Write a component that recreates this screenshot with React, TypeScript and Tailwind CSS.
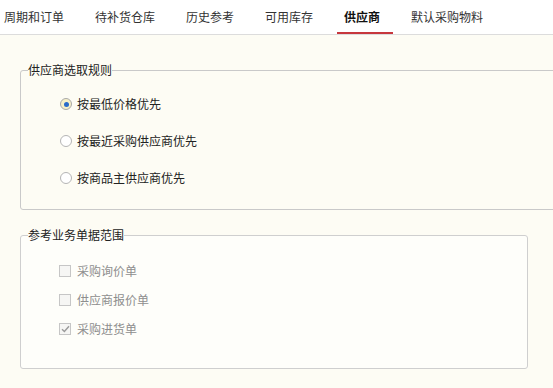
import React from 'react';

const tabs = ['周期和订单', '待补货仓库', '历史参考', '可用库存', '供应商', '默认采购物料'];

const Radio: React.FC<{ checked?: boolean; label: string }> = ({ checked, label }) => (
    <div className="flex items-center h-[20px]">
        <span
            className={`w-[12px] h-[12px] rounded-full border flex items-center justify-center ${checked ? 'border-[#a9a9a9] bg-[#f7f0c8]' : 'border-[#b5b5b5] bg-white'}`}
        >
            {checked && <span className="w-[5px] h-[5px] rounded-full bg-[#2a6bc9]" />}
        </span>
        <span className="ml-[5px] text-[12px] text-[#222]">{label}</span>
    </div>
);

const Check: React.FC<{ checked?: boolean; label: string }> = ({ checked, label }) => (
    <div className="flex items-center h-[20px]">
        <span className="w-[12px] h-[12px] border border-[#c6c6c6] bg-[#f6f6f4] flex items-center justify-center">
            {checked && (
                <svg width="9" height="8" viewBox="0 0 9 8">
                    <path d="M1 4.2 L3.4 6.5 L8 1.2" fill="none" stroke="#9a9a9a" strokeWidth="1.4" />
                </svg>
            )}
        </span>
        <span className="ml-[6px] text-[12px] text-[#8e8e8e]">{label}</span>
    </div>
);

export default function App() {
    return (
        <div
            className="w-[553px] h-[388px] overflow-hidden bg-[#fdfcf4]"
            style={{ fontFamily: '"Noto Sans CJK SC", "Noto Sans", sans-serif' }}
        >
            {/* Tabs */}
            <div className="h-[35px] bg-white border-b border-[#dcdcdc] flex items-center pl-[4px] gap-[31px]">
                {tabs.map(t => (
                    <span
                        key={t}
                        className={`relative text-[12px] leading-[16px] ${t === '供应商' ? 'font-bold text-[#111]' : 'text-[#333]'}`}
                    >
                        {t}
                        {t === '供应商' && (
                            <span className="absolute left-[-7px] right-[-13px] top-[23px] h-[2px] bg-[#c7373d]" />
                        )}
                    </span>
                ))}
            </div>

            {/* 供应商选取规则 */}
            <fieldset className="mt-[27px] ml-[20px] w-[600px] border border-[#c9c9c9] rounded-[3px] p-0">
                <legend className="ml-[7px] px-0 text-[12px] leading-[16px] text-[#222]">供应商选取规则</legend>
                <div className="pl-[39px] pt-[16px] pb-[21px] flex flex-col gap-[17px]">
                    <Radio checked label="按最低价格优先" />
                    <Radio label="按最近采购供应商优先" />
                    <Radio label="按商品主供应商优先" />
                </div>
            </fieldset>

            {/* 参考业务单据范围 */}
            <fieldset className="mt-[17px] ml-[20px] w-[508px] border border-[#cfcfcf] rounded-[3px] p-0 bg-[#fefefa]">
                <legend className="ml-[7px] px-0 text-[12px] leading-[16px] text-[#222]">参考业务单据范围</legend>
                <div className="pl-[38px] pt-[18px] pb-[29px] flex flex-col gap-[9px]">
                    <Check label="采购询价单" />
                    <Check label="供应商报价单" />
                    <Check checked label="采购进货单" />
                </div>
            </fieldset>
        </div>
    );
}
